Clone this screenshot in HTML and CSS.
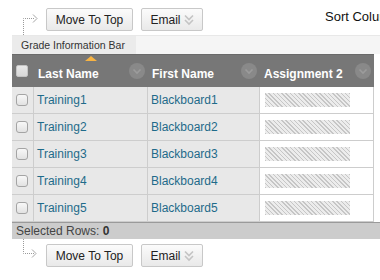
FILE: index.html
```html
<!DOCTYPE html>
<html lang="en">
<head>
  <meta charset="UTF-8">
  <title>Grade Center</title>
  <link rel="stylesheet" href="styles.css">
</head>
<body>
  <div class="page">
    <div class="toolbar top">
      <svg class="connector" width="20" height="22" viewBox="0 0 20 22">
        <path d="M3.5 22V5.5H15" fill="none" stroke="#9a9a9a" stroke-dasharray="1 1"/>
        <path d="M13 1.5l4 4-4 4" fill="none" stroke="#a6a6a6"/>
      </svg>
      <button class="btn move">Move To Top</button>
      <button class="btn email">Email
        <svg width="10" height="12" viewBox="0 0 10 12">
          <path d="M1 1.5l4 4 4-4M1 6l4 4 4-4" fill="none" stroke="#c4c4c4" stroke-width="1.6"/>
        </svg>
      </button>
      <span class="sort-label">Sort Columns By:</span>
    </div>

    <div class="info-bar"><span class="info-tab">Grade Information Bar</span></div>

    <table class="grid">
      <thead>
        <tr>
          <th class="col-check"><span class="cb head-cb"></span></th>
          <th class="col-last">
            <span class="sorted"></span>
            <div class="th-inner"><span class="th-label">Last Name</span><span class="sort-btn"><svg width="16" height="16" viewBox="0 0 16 16"><path d="M4.5 6.5l3.5 3.5 3.5-3.5" fill="none" stroke="#9c9c9c" stroke-width="1.6"/></svg></span></div>
          </th>
          <th class="col-first">
            <div class="th-inner"><span class="th-label">First Name</span><span class="sort-btn"><svg width="16" height="16" viewBox="0 0 16 16"><path d="M4.5 6.5l3.5 3.5 3.5-3.5" fill="none" stroke="#9c9c9c" stroke-width="1.6"/></svg></span></div>
          </th>
          <th class="col-grade">
            <div class="th-inner"><span class="th-label">Assignment 2</span><span class="sort-btn"><svg width="16" height="16" viewBox="0 0 16 16"><path d="M4.5 6.5l3.5 3.5 3.5-3.5" fill="none" stroke="#9c9c9c" stroke-width="1.6"/></svg></span></div>
          </th>
        </tr>
      </thead>
      <tbody>
        <tr>
          <td class="col-check"><span class="cb"></span></td>
          <td><a href="#">Training1</a></td>
          <td><a href="#">Blackboard1</a></td>
          <td class="grade"><span class="hatch"></span></td>
        </tr>
        <tr>
          <td class="col-check"><span class="cb"></span></td>
          <td><a href="#">Training2</a></td>
          <td><a href="#">Blackboard2</a></td>
          <td class="grade"><span class="hatch"></span></td>
        </tr>
        <tr>
          <td class="col-check"><span class="cb"></span></td>
          <td><a href="#">Training3</a></td>
          <td><a href="#">Blackboard3</a></td>
          <td class="grade"><span class="hatch"></span></td>
        </tr>
        <tr>
          <td class="col-check"><span class="cb"></span></td>
          <td><a href="#">Training4</a></td>
          <td><a href="#">Blackboard4</a></td>
          <td class="grade"><span class="hatch"></span></td>
        </tr>
        <tr>
          <td class="col-check"><span class="cb"></span></td>
          <td><a href="#">Training5</a></td>
          <td><a href="#">Blackboard5</a></td>
          <td class="grade"><span class="hatch"></span></td>
        </tr>
      </tbody>
    </table>

    <div class="selected-bar">Selected Rows: <b>0</b></div>

    <div class="toolbar bottom">
      <svg class="connector" width="20" height="19" viewBox="0 0 20 19">
        <path d="M3.5 0V14.5H14" fill="none" stroke="#9a9a9a" stroke-dasharray="1 1"/>
        <path d="M12 10.5l4 4-4 4" fill="none" stroke="#a6a6a6"/>
      </svg>
      <button class="btn move">Move To Top</button>
      <button class="btn email">Email
        <svg width="10" height="12" viewBox="0 0 10 12">
          <path d="M1 1.5l4 4 4-4M1 6l4 4 4-4" fill="none" stroke="#c4c4c4" stroke-width="1.6"/>
        </svg>
      </button>
    </div>
  </div>
</body>
</html>
```

FILE: styles.css
```css
html, body {
  margin: 0;
  padding: 0;
  background: #fff;
  overflow: hidden;
}
body {
  font-family: "Liberation Sans", Arial, sans-serif;
  font-size: 12px;
  color: #333;
}
.page {
  width: 480px;
  padding-left: 12px;
}
.toolbar {
  display: flex;
  align-items: flex-start;
}
.toolbar.top {
  height: 35px;
  box-sizing: border-box;
  padding-top: 8px;
}
.toolbar.bottom {
  height: 42px;
}
.connector {
  display: block;
  margin-left: 8px;
  margin-right: 6px;
  flex: none;
}
.toolbar.top .connector {
  align-self: flex-end;
}
.toolbar.bottom .btn {
  margin-top: 5px;
}
.btn {
  height: 23px;
  box-sizing: border-box;
  border: 1px solid #c8c8c8;
  border-radius: 2px;
  background: linear-gradient(#fbfbfb, #e9e9e9);
  font-family: "Liberation Sans", Arial, sans-serif;
  font-size: 12px;
  color: #222;
  padding: 0;
  display: flex;
  align-items: center;
  justify-content: center;
  gap: 3px;
}
.btn.move {
  width: 87px;
}
.btn.email {
  width: 62px;
  margin-left: 8px;
}
.sort-label {
  margin-left: 122px;
  font-size: 13px;
  color: #111;
  white-space: nowrap;
  margin-top: 1px;
}
.info-bar {
  height: 19px;
  box-sizing: border-box;
  border-top: 1px solid #e8e8e8;
  background: #f5f5f5;
  display: flex;
}
.info-tab {
  width: 124px;
  background: #ebebeb;
  font-size: 10.5px;
  color: #333;
  padding-left: 9px;
  box-sizing: border-box;
  line-height: 18px;
  white-space: nowrap;
}
.grid {
  width: 362px;
  border-collapse: separate;
  border-spacing: 0;
  table-layout: fixed;
}
.grid th {
  height: 32px;
  padding: 0;
  background: #777;
  color: #fff;
  font-size: 12px;
  font-weight: bold;
  text-align: left;
  position: relative;
  vertical-align: middle;
}
.grid thead tr th:first-child {
  border-top: 1px solid #6a6a6a;
}
.grid th {
  border-top: 1px solid #6a6a6a;
}
.col-check {
  width: 22px;
}
.col-last {
  width: 114px;
}
.col-first {
  width: 112px;
}
.col-grade {
  width: 114px;
}
.th-inner {
  display: flex;
  align-items: center;
  justify-content: space-between;
  padding-left: 4px;
}
.th-label {
  padding-top: 6px;
  white-space: nowrap;
}
.sort-btn {
  width: 16px;
  height: 16px;
  border-radius: 50%;
  background: #898989;
  margin-right: 3px;
  display: block;
}
.sort-btn svg {
  display: block;
}
.sorted {
  position: absolute;
  top: 1px;
  left: 51px;
  width: 0;
  height: 0;
  border-left: 6px solid transparent;
  border-right: 6px solid transparent;
  border-bottom: 5px solid #f7b343;
}
.cb {
  display: block;
  width: 12px;
  height: 12px;
  box-sizing: border-box;
  border: 1px solid #a4a4a4;
  border-radius: 3px;
  background: linear-gradient(#f8f8f8, #e2e2e2);
  margin-left: 4px;
}
.head-cb {
  border: 1px solid #c4c4c4;
  border-radius: 2px;
  background: linear-gradient(#e8e8e8, #d8d8d8);
  margin-top: 0;
}
.grid td {
  height: 26px;
  padding: 0 0 0 3px;
  background: #e8e8e8;
  border-bottom: 1px solid #cdcdcd;
  border-right: 1px solid #cdcdcd;
  white-space: nowrap;
  vertical-align: middle;
}
.grid td.col-check {
  padding: 0;
}
.grid td.grade {
  background: #fff;
  padding-left: 5px;
}
.grid a {
  color: #1e6b8a;
  text-decoration: none;
  font-size: 12px;
}
.hatch {
  display: block;
  width: 85px;
  height: 14px;
  background: repeating-linear-gradient(45deg, #c6c6c6 0 1px, #ececec 1px 3px);
}
.selected-bar {
  height: 16px;
  border-top: 1px solid #9a9a9a;
  background: #cccccc;
  color: #444;
  font-size: 12px;
  line-height: 16px;
  padding-left: 4px;
}
.selected-bar b {
  color: #333;
}
```
